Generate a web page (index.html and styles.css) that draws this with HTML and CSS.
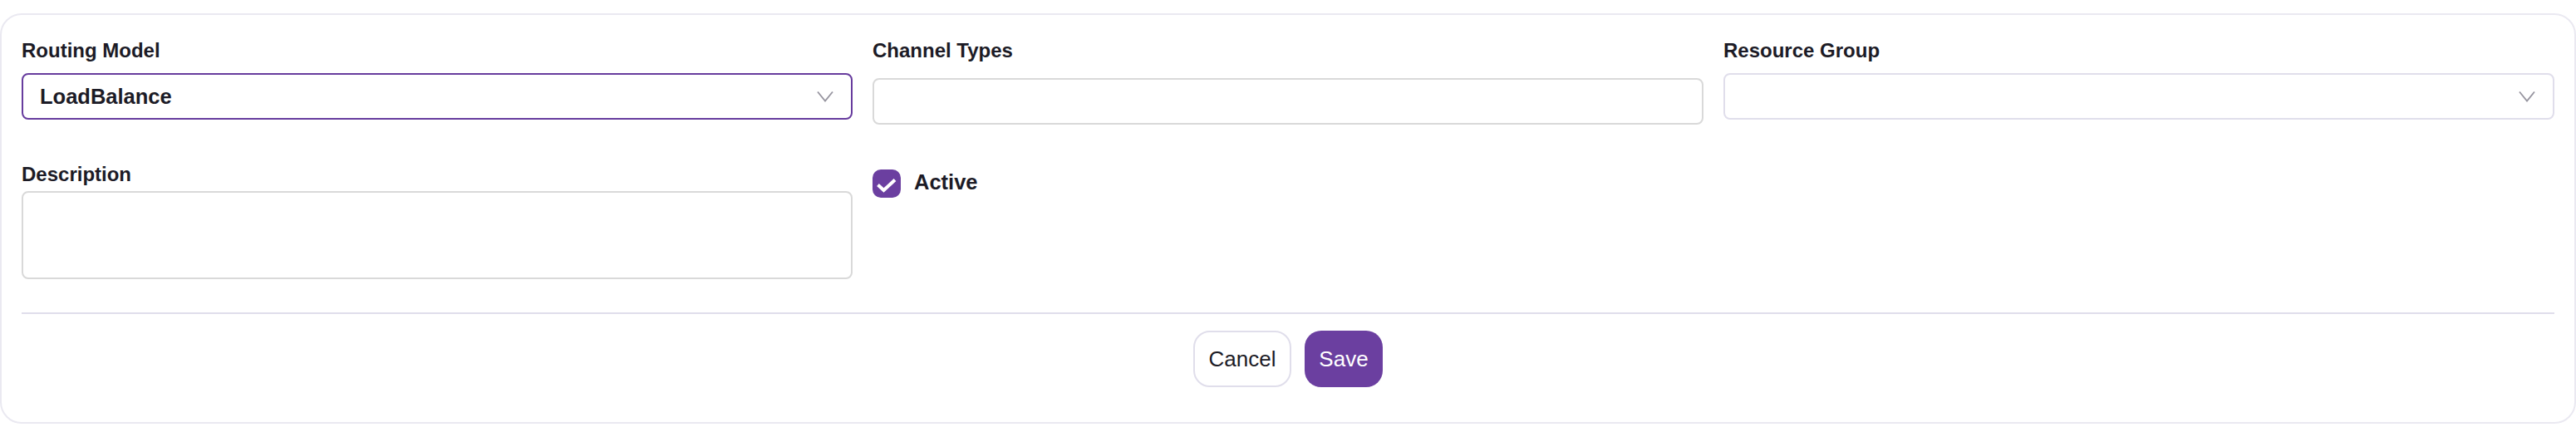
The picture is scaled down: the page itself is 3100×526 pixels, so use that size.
FILE: index.html
```html
<!DOCTYPE html>
<html lang="en">
<head>
    <meta charset="UTF-8">
    <title>Routing Settings</title>
    <link rel="stylesheet" href="styles.css">
</head>
<body>

<form class="card">
    <div class="fields">
        <div class="field">
            <label class="field-label">Routing Model</label>
            <div class="select select-focus">
                <span class="select-value">LoadBalance</span>
                <svg class="chevron" viewBox="0 0 20 14"><path d="M1 1.5 L10 12.5 L19 1.5"/></svg>
            </div>
        </div>
        <div class="field">
            <label class="field-label">Channel Types</label>
            <input class="input input-channel" type="text">
        </div>
        <div class="field">
            <label class="field-label">Resource Group</label>
            <div class="select">
                <span class="select-value"></span>
                <svg class="chevron" viewBox="0 0 20 14"><path d="M1 1.5 L10 12.5 L19 1.5"/></svg>
            </div>
        </div>
        <div class="field field-description">
            <label class="field-label">Description</label>
            <div class="textarea"></div>
        </div>
        <div class="active-row">
            <span class="checkbox">
                <svg viewBox="0 0 34 34"><path d="M6.5 18.5 L13.5 25 L27 12.5"/></svg>
            </span>
            <span class="active-label">Active</span>
        </div>
    </div>

    <div class="actions">
        <button type="button" class="btn btn-cancel">Cancel</button>
        <button type="button" class="btn btn-save">Save</button>
    </div>
</form>

</body>
</html>
```

FILE: styles.css
```css
body {
    margin: 0;
    padding: 16px 0 0;
    background-color: #fff;
    font-family: "Liberation Sans", Arial, sans-serif;
    color: #1c1b26;
}
.card {
    box-sizing: border-box;
    height: 494px;
    padding: 0 24px;
    background-color: #fff;
    border: 2px solid #eae9f1;
    border-radius: 26px;
}
.fields {
    display: grid;
    grid-template-columns: repeat(3, 1fr);
    align-content: start;
    column-gap: 24px;
    height: 358px;
    border-bottom: 2px solid #e0deeb;
}
.field-label {
    display: block;
    font-size: 24px;
    font-weight: 700;
    line-height: 30px;
    padding-top: 28px;
}
.select {
    box-sizing: border-box;
    display: flex;
    align-items: center;
    justify-content: space-between;
    height: 56px;
    margin-top: 12px;
    padding: 0 20px;
    border: 2px solid #e0deeb;
    border-radius: 8px;
}
.select-focus {
    border-color: #673c9e;
}
.select-value {
    font-size: 25.5px;
    font-weight: 700;
}
.chevron {
    width: 20px;
    height: 14px;
    margin-right: 1px;
    fill: none;
    stroke: #96949f;
    stroke-width: 1.8;
}
.input {
    box-sizing: border-box;
    display: block;
    width: 100%;
    height: 56px;
    margin-top: 18px;
    border: 2px solid #d9d9d9;
    border-radius: 8px;
    background: #fff;
}
.field-description .field-label {
    padding-top: 45px;
}
.textarea {
    box-sizing: border-box;
    height: 106px;
    margin-top: 5px;
    border: 2px solid #d9d9d9;
    border-radius: 8px;
}
.active-row {
    display: flex;
    align-items: flex-start;
    gap: 16px;
    padding-top: 54px;
}
.checkbox {
    display: block;
    width: 34px;
    height: 34px;
    background-color: #6b3fa0;
    border-radius: 10px;
}
.checkbox svg {
    display: block;
    fill: none;
    stroke: #fff;
    stroke-width: 4;
}
.active-label {
    font-size: 25.5px;
    font-weight: 700;
    line-height: 30px;
}
.actions {
    display: flex;
    justify-content: center;
    gap: 16px;
    padding-top: 20px;
}
.btn {
    box-sizing: border-box;
    height: 68px;
    font-family: inherit;
    font-size: 26px;
    border-radius: 20px;
}
.btn-cancel {
    width: 118px;
    background-color: #fff;
    color: #1c1b26;
    border: 2px solid #e0deeb;
}
.btn-save {
    width: 94px;
    background-color: #6b3fa0;
    color: #fff;
    border: none;
}
```
